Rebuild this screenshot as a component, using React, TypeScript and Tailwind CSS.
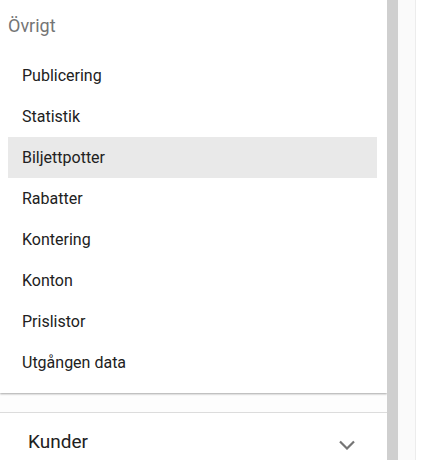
import React from "react";

const items = [
  "Publicering",
  "Statistik",
  "Biljettpotter",
  "Rabatter",
  "Kontering",
  "Konton",
  "Prislistor",
  "Utgången data",
];

const App = () => {
  return (
    <div
      className="flex h-[460px] w-[436px] overflow-hidden bg-white"
      style={{ fontFamily: "Roboto, 'Liberation Sans', sans-serif" }}
    >
      <div className="flex w-[387px] shrink-0 flex-col bg-[#fdfdfd]">
        <div className="shrink-0 bg-white pb-[10px] shadow-[0_1px_2px_rgba(0,0,0,0.35)]">
          <div className="h-[55px] pl-[8px] pt-[13px] text-[18px] leading-[26px] text-[#757575]">
            Övrigt
          </div>
          <ul>
            {items.map((item) => (
              <li
                key={item}
                className={
                  item === "Biljettpotter"
                    ? "ml-[8px] mr-[10px] h-[41px] bg-[#e9e9e9] pl-[14px] text-[16px] leading-[41px] text-[#212121]"
                    : "ml-[8px] mr-[10px] h-[41px] pl-[14px] text-[16px] leading-[41px] text-[#212121]"
                }
              >
                {item}
              </li>
            ))}
          </ul>
        </div>
        <div className="h-[19px] shrink-0" />
        <div className="flex h-[56px] shrink-0 items-center justify-between border-t border-[#dcdcdc] bg-white pl-[28px] pr-[32px] pt-[4px]">
          <span className="text-[19px] text-[#212121]">Kunder</span>
          <svg width="16" height="10" viewBox="0 0 16 10" className="mt-[4px] text-[#757575]">
            <path d="M1 1.5 L8 8.5 L15 1.5" fill="none" stroke="currentColor" strokeWidth="2.2" />
          </svg>
        </div>
      </div>
      <div className="w-[11px] shrink-0 bg-[#cfcfcf]" />
      <div className="w-[18px] shrink-0 border-r border-[#ececec] bg-[#fafafa]" />
      <div className="flex-1 bg-white" />
    </div>
  );
};

export default App;
